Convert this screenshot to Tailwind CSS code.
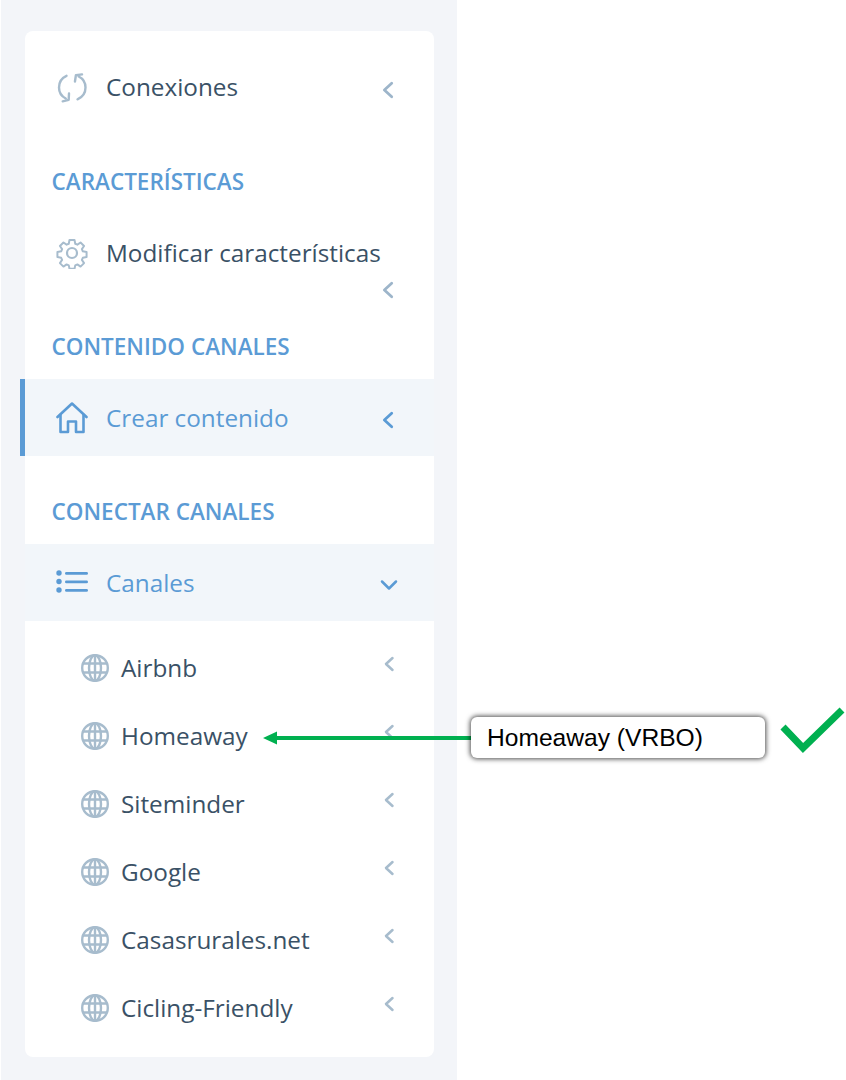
<!DOCTYPE html>
<html lang="es">
<head>
    <meta charset="UTF-8">
    <meta name="viewport" content="width=device-width, initial-scale=1.0">
    <title>Canales</title>
    <script src="https://cdn.jsdelivr.net/npm/@tailwindcss/browser@4"></script>
</head>
<body class="relative h-[1080px] w-[846px] overflow-hidden bg-white font-['Open_Sans',sans-serif] text-[24.3px] text-[#3a5166]">
    <!-- sidebar -->
    <aside class="ml-px h-[1080px] w-[456px] bg-[#f3f5f9] pl-[24px] pr-[23px] pt-[31px]">
        <nav class="h-[1026px] w-[409px] rounded-lg bg-white pt-[18px]">
            <!-- conexiones -->
            <a class="flex h-[77px] items-center pl-[31px] pr-[40px]">
                <svg class="h-[32px] w-[32px] text-[#a7bccd]" viewBox="0 0 32 32" fill="none" stroke="currentColor" stroke-width="2.400" stroke-linecap="round" stroke-linejoin="round"><path d="M10.500 3.800C5.600 6 3 10.300 3 15.500c0 4.900 2.700 8.900 6.800 11"/><path d="M13 21.500l-.3 6.300-6 1.500"/><path d="M21.500 27.300c4.900-2.100 8-6.500 8-11.800 0-4.900-2.700-9-6.800-11"/><path d="M19 9.500l.3-6.300 6-1.500" transform="rotate(6 19 9)"/></svg>
                <span class="mb-[2px] ml-[18px] leading-[28px]">Conexiones</span>
                <svg class="ml-auto mt-[4px] h-[18px] w-[13.5px] text-[#9db5ca]" viewBox="0 0 12 16" fill="none" stroke="currentColor" stroke-width="2.500" stroke-linecap="round" stroke-linejoin="round"><path d="M9.500 2L3 8l6.500 6"/></svg>
            </a>

            <h3 class="h-[88px] pl-[26.5px] pt-[42px] text-[22.5px] font-semibold leading-[28px] text-[#5b9bd5]">CARACTERÍSTICAS</h3>

            <!-- modificar: the arrow wraps onto a second line -->
            <a class="flex h-[77px] flex-wrap content-start items-center pl-[31px] pr-[36px] pt-[23px]">
                <svg class="h-[32px] w-[32px] text-[#a7bccd]" viewBox="0 0 32 32" fill="none" stroke="currentColor" stroke-width="2.200" stroke-linejoin="round"><path d="M13.200 1.500h5.600l.8 4.200 2.400 1 3.500-2.400 3.900 3.900-2.400 3.500 1 2.400 4.200.8v5.600l-4.200.8-1 2.400 2.400 3.500-3.900 3.900-3.500-2.400-2.400 1-.8 3.800h-5.600l-.8-3.800-2.400-1-3.500 2.400-3.900-3.900 2.400-3.500-1-2.400-4.200-.8v-5.600l4.200-.8 1-2.400-2.400-3.500 3.900-3.900 3.500 2.400 2.400-1z" transform="translate(1.600 1.600) scale(.9)"/><circle cx="16" cy="16" r="5"/></svg>
                <span class="ml-[18px] leading-[28px]">Modificar características</span>
                <svg class="ml-[324.5px] mt-[12px] h-[18px] w-[13.5px] text-[#9db5ca]" viewBox="0 0 12 16" fill="none" stroke="currentColor" stroke-width="2.500" stroke-linecap="round" stroke-linejoin="round"><path d="M9.500 2L3 8l6.500 6"/></svg>
            </a>

            <h3 class="h-[88px] pl-[26.5px] pt-[42px] text-[22.5px] font-semibold leading-[28px] text-[#5b9bd5]">CONTENIDO CANALES</h3>

            <!-- crear contenido -->
            <a class="-ml-[5px] flex h-[77px] items-center border-l-[5px] border-[#5b9bd5] bg-[#f2f6fa] pl-[31px] pr-[40px] text-[#5b9bd5]">
                <svg class="h-[32px] w-[32px]" viewBox="0 0 32 32" fill="none" stroke="currentColor" stroke-width="2.600" stroke-linecap="round" stroke-linejoin="round"><path d="M1.500 15L16 1.500 30.500 15"/><path d="M4.500 13v17h7.500V19.500h8V30h7.500V13"/></svg>
                <span class="ml-[18px] leading-[28px]">Crear contenido</span>
                <svg class="ml-auto mt-[4px] h-[18px] w-[13.5px]" viewBox="0 0 12 16" fill="none" stroke="currentColor" stroke-width="2.500" stroke-linecap="round" stroke-linejoin="round"><path d="M9.500 2L3 8l6.500 6"/></svg>
            </a>

            <h3 class="h-[88px] pl-[26.5px] pt-[42px] text-[22.5px] font-semibold leading-[28px] text-[#5b9bd5]">CONECTAR CANALES</h3>

            <!-- canales -->
            <a class="flex h-[77px] items-center bg-[#f2f6fa] pl-[31px] pr-[36px] text-[#5b9bd5]">
                <svg class="h-[32px] w-[32px]" viewBox="0 0 32 32" fill="currentColor"><circle cx="3" cy="6" r="2.700"/><circle cx="3" cy="14.500" r="2.700"/><circle cx="3" cy="23" r="2.700"/><rect x="9" y="5" width="23" height="2.800" rx="1.400"/><rect x="9" y="13.500" width="23" height="2.800" rx="1.400"/><rect x="9" y="22" width="23" height="2.800" rx="1.400"/></svg>
                <span class="ml-[18px] leading-[28px]">Canales</span>
                <svg class="ml-auto mt-[4px] h-[12px] w-[18px]" viewBox="0 0 18 12" fill="none" stroke="currentColor" stroke-width="2.500" stroke-linecap="round" stroke-linejoin="round"><path d="M2 2.500l7 7 7-7"/></svg>
            </a>

            <!-- lista de canales -->
            <ul class="pt-[13px]">
                <li class="flex h-[68px] items-center pl-[55.5px] pr-[39px]">
                    <svg class="h-[28px] w-[28px] text-[#a7bccd]" viewBox="0 0 28 28" fill="none" stroke="currentColor" stroke-width="2.400"><circle cx="14" cy="14" r="12.800"/><ellipse cx="14" cy="14" rx="6" ry="12.800"/><path d="M14 1v26M2 9.500h24M2 18.500h24"/></svg>
                    <span class="ml-[12.5px] leading-[28px]">Airbnb</span>
                    <svg class="mb-[8px] ml-auto h-[16px] w-[12px] text-[#a7bccd]" viewBox="0 0 12 16" fill="none" stroke="currentColor" stroke-width="2.500" stroke-linecap="round" stroke-linejoin="round"><path d="M9.500 2L3 8l6.500 6"/></svg>
                </li>
                <li class="flex h-[68px] items-center pl-[55.5px] pr-[39px]">
                    <svg class="h-[28px] w-[28px] text-[#a7bccd]" viewBox="0 0 28 28" fill="none" stroke="currentColor" stroke-width="2.400"><circle cx="14" cy="14" r="12.800"/><ellipse cx="14" cy="14" rx="6" ry="12.800"/><path d="M14 1v26M2 9.500h24M2 18.500h24"/></svg>
                    <span class="ml-[12.5px] leading-[28px]">Homeaway</span>
                    <svg class="mb-[8px] ml-auto h-[16px] w-[12px] text-[#a7bccd]" viewBox="0 0 12 16" fill="none" stroke="currentColor" stroke-width="2.500" stroke-linecap="round" stroke-linejoin="round"><path d="M9.500 2L3 8l6.500 6"/></svg>
                </li>
                <li class="flex h-[68px] items-center pl-[55.5px] pr-[39px]">
                    <svg class="h-[28px] w-[28px] text-[#a7bccd]" viewBox="0 0 28 28" fill="none" stroke="currentColor" stroke-width="2.400"><circle cx="14" cy="14" r="12.800"/><ellipse cx="14" cy="14" rx="6" ry="12.800"/><path d="M14 1v26M2 9.500h24M2 18.500h24"/></svg>
                    <span class="ml-[12.5px] leading-[28px]">Siteminder</span>
                    <svg class="mb-[8px] ml-auto h-[16px] w-[12px] text-[#a7bccd]" viewBox="0 0 12 16" fill="none" stroke="currentColor" stroke-width="2.500" stroke-linecap="round" stroke-linejoin="round"><path d="M9.500 2L3 8l6.500 6"/></svg>
                </li>
                <li class="flex h-[68px] items-center pl-[55.5px] pr-[39px]">
                    <svg class="h-[28px] w-[28px] text-[#a7bccd]" viewBox="0 0 28 28" fill="none" stroke="currentColor" stroke-width="2.400"><circle cx="14" cy="14" r="12.800"/><ellipse cx="14" cy="14" rx="6" ry="12.800"/><path d="M14 1v26M2 9.500h24M2 18.500h24"/></svg>
                    <span class="ml-[12.5px] leading-[28px]">Google</span>
                    <svg class="mb-[8px] ml-auto h-[16px] w-[12px] text-[#a7bccd]" viewBox="0 0 12 16" fill="none" stroke="currentColor" stroke-width="2.500" stroke-linecap="round" stroke-linejoin="round"><path d="M9.500 2L3 8l6.500 6"/></svg>
                </li>
                <li class="flex h-[68px] items-center pl-[55.5px] pr-[39px]">
                    <svg class="h-[28px] w-[28px] text-[#a7bccd]" viewBox="0 0 28 28" fill="none" stroke="currentColor" stroke-width="2.400"><circle cx="14" cy="14" r="12.800"/><ellipse cx="14" cy="14" rx="6" ry="12.800"/><path d="M14 1v26M2 9.500h24M2 18.500h24"/></svg>
                    <span class="ml-[12.5px] leading-[28px]">Casasrurales.net</span>
                    <svg class="mb-[8px] ml-auto h-[16px] w-[12px] text-[#a7bccd]" viewBox="0 0 12 16" fill="none" stroke="currentColor" stroke-width="2.500" stroke-linecap="round" stroke-linejoin="round"><path d="M9.500 2L3 8l6.500 6"/></svg>
                </li>
                <li class="flex h-[68px] items-center pl-[55.5px] pr-[39px]">
                    <svg class="h-[28px] w-[28px] text-[#a7bccd]" viewBox="0 0 28 28" fill="none" stroke="currentColor" stroke-width="2.400"><circle cx="14" cy="14" r="12.800"/><ellipse cx="14" cy="14" rx="6" ry="12.800"/><path d="M14 1v26M2 9.500h24M2 18.500h24"/></svg>
                    <span class="ml-[12.5px] leading-[28px]">Cicling-Friendly</span>
                    <svg class="mb-[8px] ml-auto h-[16px] w-[12px] text-[#a7bccd]" viewBox="0 0 12 16" fill="none" stroke="currentColor" stroke-width="2.500" stroke-linecap="round" stroke-linejoin="round"><path d="M9.500 2L3 8l6.500 6"/></svg>
                </li>
            </ul>
        </nav>
    </aside>

    <!-- anotacion sobre la captura -->
    <svg class="absolute left-[263px] top-[730px] h-[16px] w-[209px] text-[#00b050]" viewBox="0 0 209 16" fill="currentColor"><path d="M0 8l14-6.500V6h195v4H14v4.500z"/></svg>
    <div class="absolute left-[471px] top-[717px] flex h-[41px] w-[294px] items-center rounded-md bg-white pl-[16px] pt-[2px] font-['Liberation_Sans',sans-serif] text-[24.6px] text-black shadow-[0_0_5px_1px_rgba(0,0,0,0.7)]">Homeaway (VRBO)</div>
    <svg class="absolute left-[780px] top-[706px] h-[48px] w-[66px] text-[#00b050]" viewBox="0 0 66 48" fill="none" stroke="currentColor" stroke-width="7"><path d="M3 21l20 21L62 4"/></svg>
</body>
</html>
